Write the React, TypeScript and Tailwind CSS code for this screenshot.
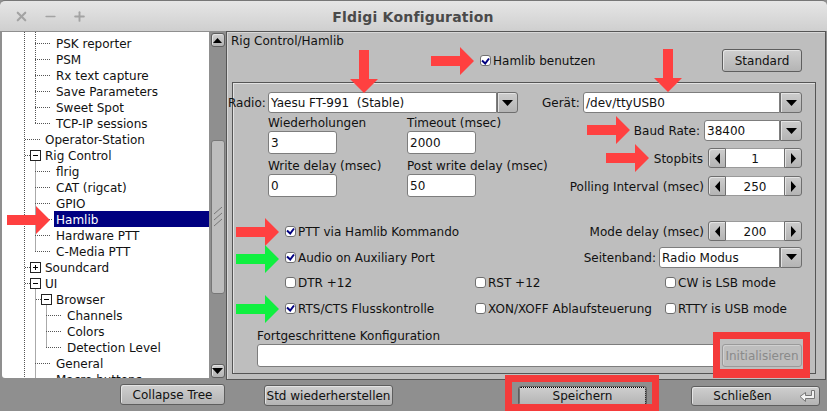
import React from "react";
import { X, Minus, Plus } from "lucide-react";

const Tri = ({ dir = "down" }: { dir?: "down" | "up" | "left" | "right" }) => {
  if (dir === "down") return <svg width="11" height="6"><path d="M0 0H11L5.5 6Z" fill="#000" /></svg>;
  if (dir === "up") return <svg width="9" height="5"><path d="M0 5H9L4.5 0Z" fill="#000" /></svg>;
  if (dir === "left") return <svg width="5" height="11"><path d="M5 0V11L0 5.5Z" fill="#000" /></svg>;
  return <svg width="5" height="11"><path d="M0 0V11L5 5.5Z" fill="#000" /></svg>;
};

const bevel = "border border-[#6e6e6e] bg-gradient-to-b from-[#cdcdcd] to-[#b4b4b4] shadow-[inset_1px_1px_0_#e4e4e4]";

const Check = ({ on, label, w }: { on?: boolean; label: string; w?: string }) => (
  <div className={`flex items-center h-full ${w ?? ""}`}>
    <span className="w-[11px] h-[11px] mr-[2px] rounded-[3px] bg-white border border-[#707070] flex items-center justify-center shrink-0">
      {on && (
        <svg width="9" height="8">
          <path d="M1 3.5L4.2 6.5L8 1.5" fill="none" stroke="#000080" strokeWidth="2" />
        </svg>
      )}
    </span>
    <span className="whitespace-nowrap pt-[1px]">{label}</span>
  </div>
);

const Input = ({ v, w, h = "h-[22px]" }: { v?: string; w: string; h?: string }) => (
  <div className={`${w} ${h} bg-white border border-[#7d7d7d] rounded-[3px] flex items-center px-[2px] pt-[1px] shrink-0`}>
    {v}
  </div>
);

const Combo = ({ v, w, b = "w-[22px]" }: { v: string; w: string; b?: string }) => (
  <div className="flex h-[21px] shrink-0">
    <div className={`${w} bg-white border border-[#7d7d7d] rounded-l-[3px] flex items-center pl-[2px] pt-[1px] whitespace-pre`}>{v}</div>
    <div className={`${b} rounded-r-[3px] flex items-center justify-center ${bevel}`}>
      <Tri />
    </div>
  </div>
);

const Counter = ({ v }: { v: string }) => (
  <div className="flex h-[20px] w-[94px] shrink-0">
    <div className={`w-[18px] rounded-l-[3px] flex items-center justify-center ${bevel}`}><Tri dir="left" /></div>
    <div className="flex-1 bg-white border-y border-[#9a9a9a] flex items-center justify-center pt-[1px]">{v}</div>
    <div className={`w-[18px] rounded-r-[3px] flex items-center justify-center ${bevel}`}><Tri dir="right" /></div>
  </div>
);

const Btn = ({ children, cls }: { children: React.ReactNode; cls: string }) => (
  <div className={`flex items-center justify-center rounded-[3px] shrink-0 whitespace-nowrap border border-[#5e5e5e] bg-gradient-to-b from-[#cfcfcf] to-[#b4b4b4] shadow-[inset_1px_1px_0_#e4e4e4] ${cls}`}>
    {children}
  </div>
);

const Arrow = ({ x, y, dir, color = "#ff4040" }: { x: number; y: number; dir: "right" | "down"; color?: string }) =>
  dir === "right" ? (
    <svg className="absolute" style={{ left: x, top: y }} width="43" height="28">
      <path d="M0 9H29V0L43 14L29 28V19H0Z" fill={color} />
    </svg>
  ) : (
    <svg className="absolute" style={{ left: x, top: y }} width="28" height="43">
      <path d="M9 0H19V29H28L14 43L0 29H9Z" fill={color} />
    </svg>
  );

const treeRows: { t: string; l: number; sel?: boolean }[] = [
  { t: "PSK reporter", l: 56 },
  { t: "PSM", l: 56 },
  { t: "Rx text capture", l: 56 },
  { t: "Save Parameters", l: 56 },
  { t: "Sweet Spot", l: 56 },
  { t: "TCP-IP sessions", l: 56 },
  { t: "Operator-Station", l: 45 },
  { t: "Rig Control", l: 45 },
  { t: "flrig", l: 56 },
  { t: "CAT (rigcat)", l: 56 },
  { t: "GPIO", l: 56 },
  { t: "Hamlib", l: 56, sel: true },
  { t: "Hardware PTT", l: 56 },
  { t: "C-Media PTT", l: 56 },
  { t: "Soundcard", l: 45 },
  { t: "UI", l: 45 },
  { t: "Browser", l: 56 },
  { t: "Channels", l: 67 },
  { t: "Colors", l: 67 },
  { t: "Detection Level", l: 67 },
  { t: "General", l: 56 },
  { t: "Macro buttons", l: 56 },
];

const TreeLines = () => {
  const y = (i: number) => 11.5 + i * 16;
  const dots = { stroke: "#555", strokeDasharray: "1 1", fill: "none" };
  const box = (bx: number, i: number, plus: boolean) => (
    <g key={`${bx}-${i}`}>
      <rect x={bx + 0.5} y={y(i) - 5} width="10" height="10" fill="#fff" stroke="#222" />
      <path d={`M${bx + 3} ${y(i)}H${bx + 8}`} stroke="#000" />
      {plus && <path d={`M${bx + 5.5} ${y(i) - 2.5}V${y(i) + 2.5}`} stroke="#000" />}
    </g>
  );
  const h: [number, number, number][] = [
    [33, 49, 0], [33, 49, 1], [33, 49, 2], [33, 49, 3], [33, 49, 4], [33, 49, 5],
    [23, 38, 6], [23, 28, 7], [33, 49, 8], [33, 49, 9], [33, 49, 10], [33, 50, 11], [33, 49, 12], [33, 49, 13],
    [23, 28, 14], [23, 28, 15], [34, 39, 16], [44, 59, 17], [44, 59, 18], [44, 59, 19], [33, 49, 20], [33, 49, 21],
  ];
  return (
    <svg className="absolute left-0 top-0" width="207" height="346">
      <path d="M22.5 0V346" {...dots} />
      <path d="M33.5 0V91" {...dots} />
      <path d={`M33.5 ${y(7)}V${y(13)}`} {...dots} />
      <path d={`M33.5 ${y(15)}V346`} {...dots} />
      <path d={`M44.5 ${y(16)}V${y(19)}`} {...dots} />
      {h.map(([a, b, i]) => (
        <path key={i} d={`M${a} ${y(i)}H${b}`} {...dots} />
      ))}
      {box(28, 7, false)}
      {box(28, 14, true)}
      {box(28, 15, false)}
      {box(39, 16, false)}
    </svg>
  );
};

export default function App() {
  return (
    <div className="relative w-[827px] h-[411px] overflow-hidden flex flex-col bg-[#8f8f8f] text-[#111] text-[12px] leading-none font-['DejaVu_Sans',sans-serif]">
      {/* title bar */}
      <div className="h-[31px] shrink-0 relative flex items-center justify-center bg-gradient-to-b from-[#e6e6e6] to-[#cfcfcf] border-t border-[#777] rounded-t-[5px] text-[#4a4a4a]">
        <div className="flex items-center gap-[14px] text-[#a3a3a3] pl-[14px] w-[110px]">
          <X size={15} strokeWidth={3.4} />
          <Minus size={15} strokeWidth={2.5} />
          <Plus size={15} strokeWidth={3} />
        </div>
        <div className="flex-1 text-center font-bold text-[14px] tracking-[0.2px] pr-[1px] pt-[2px]">Fldigi Konfiguration</div>
        <div className="w-[110px]" />
      </div>

      {/* main */}
      <div className="flex h-[349px] shrink-0">
        {/* tree */}
        <div className="flex w-[225px] shrink-0 pl-[2px] pb-[2px]">
          <div className="relative w-[207px] h-[346px] mt-[1px] bg-white rounded-bl-[3px] overflow-hidden">
            <TreeLines />
            <div className="relative pt-[3px]">
              {treeRows.map((r) => (
                <div key={r.t} className="relative h-[16px] flex items-center whitespace-nowrap pt-[1px]" style={{ paddingLeft: r.l - 2 }}>
                  {r.sel ? (
                    <span className="absolute left-[52px] right-0 top-0 h-[16px] bg-[#000080] text-white flex items-center pl-[2px] pt-[1px]">{r.t}</span>
                  ) : (
                    r.t
                  )}
                </div>
              ))}
            </div>
          </div>
          <div className="w-[16px] flex flex-col items-center pt-[2px] pl-[1px]">
            <Btn cls="w-[14px] h-[14px]"><Tri dir="up" /></Btn>
            <div className="w-[14px] h-[154px] mt-[93px] rounded-[3px] border border-[#777] bg-[#bdbdbd] flex items-center justify-center shrink-0">
              <svg width="10" height="20">
                <path d="M1 7L9 0M1 13L9 6M1 19L9 12" stroke="#777" fill="none" />
              </svg>
            </div>
            <Btn cls="w-[14px] h-[14px] mt-[70px]"><Tri /></Btn>
          </div>
        </div>

        {/* pane */}
        <div className="ml-[1px] w-[600px] h-[349px] shrink-0 border border-[#555] bg-[#bebebe] shadow-[inset_1px_1px_0_#d8d8d8]">
          <div className="pl-[4px] h-[17px] flex items-center pt-[1px]">Rig Control/Hamlib</div>
          <div className="flex h-[23px] pl-[253px]">
            <div className="w-[242px] h-[23px]"><Check on label="Hamlib benutzen" /></div>
            <Btn cls="w-[80px] h-[23px]">Standard</Btn>
          </div>

          {/* group */}
          <div className="ml-[5px] mt-[10px] w-[584px] h-[292px] border border-[#555] shadow-[inset_1px_1px_0_#e2e2e2]">
            <div className="flex items-center h-[21px] mt-[9px] -ml-[5px]">
              <span className="w-[39px] pt-[1px]">Radio:</span>
              <span className="ml-[1px]"><Combo v="Yaesu FT-991  (Stable)" w="w-[229px]" b="w-[21px]" /></span>
              <span className="ml-[24px] w-[41px] pt-[1px]">Gerät:</span>
              <Combo v="/dev/ttyUSB0" w="w-[197px]" />
            </div>

            <div className="flex h-[84px] mt-[1px]">
              <div className="pl-[35px] w-[310px] grid grid-cols-[139px_139px] grid-rows-[43px_41px]">
                {[["Wiederholungen", "3"], ["Timeout (msec)", "2000"], ["Write delay (msec)", "0"], ["Post write delay (msec)", "50"]].map(([l, v]) => (
                  <div key={l} className="flex flex-col whitespace-nowrap">
                    <span className="h-[17px] flex items-center pt-[1px]">{l}</span>
                    <Input v={v} w="w-[69px]" h="h-[23px]" />
                  </div>
                ))}
              </div>
              <div className="flex-1 flex flex-col items-end pr-[13px] pt-[6px]">
                <div className="flex items-center h-[21px]">
                  <span className="mr-[4px] pt-[1px]">Baud Rate:</span>
                  <Combo v="38400" w="w-[76px]" />
                </div>
                <div className="flex items-center h-[20px] mt-[7px]">
                  <span className="mr-[5px] pt-[1px]">Stopbits</span>
                  <Counter v="1" />
                </div>
                <div className="flex items-center h-[20px] mt-[8px]">
                  <span className="mr-[4px] pt-[1px]">Polling Interval (msec)</span>
                  <Counter v="250" />
                </div>
              </div>
            </div>

            <div className="flex items-center justify-between h-[20px] mt-[23px] pl-[52px] pr-[13px]">
              <Check on label="PTT via Hamlib Kommando" />
              <div className="flex items-center">
                <span className="mr-[4px] pt-[1px]">Mode delay (msec)</span>
                <Counter v="200" />
              </div>
            </div>
            <div className="flex items-center justify-between h-[22px] mt-[5px] pl-[52px] pr-[13px]">
              <Check on label="Audio on Auxiliary Port" />
              <div className="flex items-center">
                <span className="mr-[3px] pt-[1px]">Seitenband:</span>
                <Combo v="Radio Modus" w="w-[121px]" />
              </div>
            </div>
            <div className="flex h-[20px] mt-[4px] pl-[52px]">
              <Check label="DTR +12" w="w-[190px]" />
              <Check label="RST +12" w="w-[190px]" />
              <Check label="CW is LSB mode" />
            </div>
            <div className="flex h-[20px] mt-[6px] pl-[52px]">
              <Check on label="RTS/CTS Flusskontrolle" w="w-[190px]" />
              <Check label="XON/XOFF Ablaufsteuerung" w="w-[190px]" />
              <Check label="RTTY is USB mode" />
            </div>
            <div className="pl-[24px] h-[16px] mt-[9px] flex items-center pt-[1px]">Fortgeschrittene Konfiguration</div>
            <div className="flex pl-[24px] mt-[1px]">
              <Input w="w-[459px]" h="h-[23px]" />
              <div className="ml-[6px] w-[80px] h-[23px] rounded-[3px] border border-[#9a9a9a] flex items-center justify-center text-[#8a8a8a] shadow-[inset_1px_1px_0_#d0d0d0]">
                Initialisieren
              </div>
            </div>
          </div>
        </div>
      </div>

      {/* bottom bar */}
      <div className="flex flex-1 items-start pl-[120px] pt-[4px]">
        <Btn cls="w-[105px] h-[21px]">Collapse Tree</Btn>
        <Btn cls="w-[129px] h-[21px] ml-[39px] mt-[1px]">Std wiederherstellen</Btn>
        <Btn cls="w-[129px] h-[20px] ml-[125px] mt-[2px] outline-1 outline-dotted -outline-offset-2 outline-black">Speichern</Btn>
        <div className="ml-[44px] mt-[2px] relative">
          <Btn cls="w-[129px] h-[20px] pr-[26px]">Schließen</Btn>
          <svg className="absolute right-[4px] top-[3px]" width="17" height="14">
            <path d="M15.5 1.5V9.5H6.5V12.5L1 7.5L6.5 3.5V6.5H12.5V1.5Z" fill="#f2f2f2" stroke="#777" />
          </svg>
        </div>
      </div>

      {/* overlay annotations */}
      <Arrow x={7} y={206} dir="right" />
      <Arrow x={431} y={47} dir="right" />
      <Arrow x={350} y={50} dir="down" />
      <Arrow x={654} y={49} dir="down" />
      <Arrow x={587} y={116} dir="right" />
      <Arrow x={606} y={144} dir="right" />
      <Arrow x={236} y={218} dir="right" />
      <Arrow x={236} y={245} dir="right" color="#10f040" />
      <Arrow x={236} y={295} dir="right" color="#10f040" />
      <div className="absolute left-[713px] top-[332px] w-[97px] h-[46px] border-[#f43a3a] border-x-[7px] border-t-[7px] border-b-[9px]" />
      <div className="absolute left-[505px] top-[375px] w-[154px] h-[36px] border-[#f43a3a] border-[7px]" />
    </div>
  );
}
